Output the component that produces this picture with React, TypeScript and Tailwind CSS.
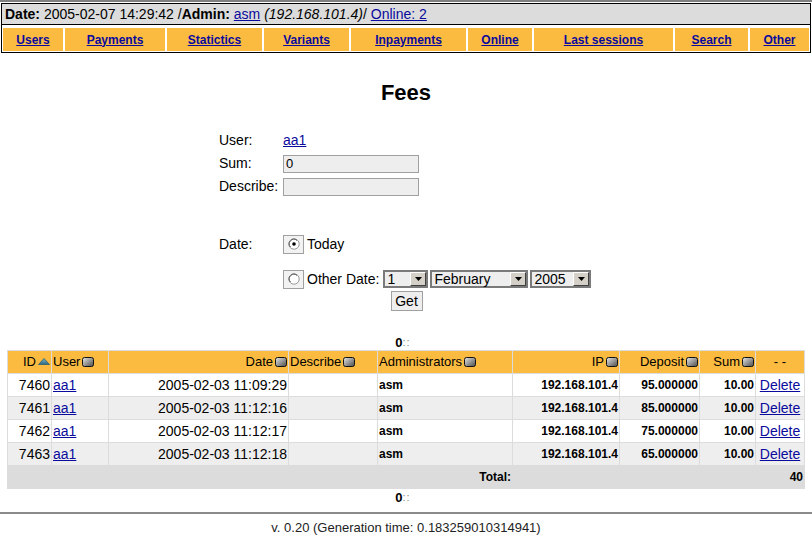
import React from "react";

const LINK = "text-[#0a0a9c] underline";

const navItems = [
  "Users",
  "Payments",
  "Statictics",
  "Variants",
  "Inpayments",
  "Online",
  "Last sessions",
  "Search",
  "Other",
];

const rows = [
  { id: 7460, date: "2005-02-03 11:09:29", dep: "95.000000" },
  { id: 7461, date: "2005-02-03 11:12:16", dep: "85.000000" },
  { id: 7462, date: "2005-02-03 11:12:17", dep: "75.000000" },
  { id: 7463, date: "2005-02-03 11:12:18", dep: "65.000000" },
];

// little grey "sort by" button
function SortBox() {
  return (
    <svg width="12" height="10" viewBox="0 0 12 10" className="inline-block align-[-1px] ml-[2px]">
      <defs>
        <linearGradient id="sb" x1="0" y1="0" x2="1" y2="1">
          <stop offset="0" stopColor="#e8e8e8" />
          <stop offset="1" stopColor="#4a4a4a" />
        </linearGradient>
      </defs>
      <rect x="0.5" y="0.5" width="11" height="9" rx="2" fill="url(#sb)" stroke="#111" />
    </svg>
  );
}

function SortUp() {
  return (
    <svg width="12" height="7" viewBox="0 0 12 7" className="inline-block align-[1px] ml-[2px]">
      <defs>
        <linearGradient id="su" x1="0" y1="0" x2="0" y2="1">
          <stop offset="0" stopColor="#7fb6cc" />
          <stop offset="1" stopColor="#2b6880" />
        </linearGradient>
      </defs>
      <path d="M6 0.5 L11.5 6.5 L0.5 6.5 Z" fill="url(#su)" stroke="#2b5f74" strokeWidth="0.8" />
    </svg>
  );
}

function Radio({ checked }: { checked?: boolean }) {
  return (
    <div className="w-[21px] h-[19px] border border-[#a0a0a0] bg-[#f2f2f2] flex items-center justify-center">
      <svg width="12" height="12" viewBox="0 0 12 12">
        <circle cx="6" cy="6" r="5.2" fill="#fff" stroke="#9a9a9a" />
        <path d="M2.5 9 A4.6 4.6 0 0 1 9 2.5" fill="none" stroke="#555" strokeWidth="1" />
        {checked && <circle cx="6" cy="6" r="1.8" fill="#000" />}
      </svg>
    </div>
  );
}

function FakeSelect({ value, width }: { value: string; width: string }) {
  return (
    <div className={`${width} h-[18px] border-2 border-[#7a7a7a] bg-[#eeeeee] flex items-center justify-between`}>
      <span className="pl-[2px] text-[14px] leading-none">{value}</span>
      <span className="w-[16px] h-[14px] bg-[#d4d0c8] border border-t-white border-l-white border-r-[#404040] border-b-[#404040] flex items-center justify-center">
        <svg width="7" height="4" viewBox="0 0 7 4">
          <path d="M0 0 H7 L3.5 4 Z" fill="#000" />
        </svg>
      </span>
    </div>
  );
}

function Pager() {
  return (
    <div className="h-[16px] flex items-center justify-center text-[13px] leading-none">
      <b className="ml-[-6px]">0</b>
      <span className="text-[#8a8a8a] text-[11px] tracking-[1px]">::</span>
    </div>
  );
}

export default function App() {
  const th = "h-[23px] border border-[#dcdcdc] text-[13px] font-normal px-[1px] whitespace-nowrap";
  const td = "h-[23px] border border-[#dcdcdc] px-[1px] whitespace-nowrap";

  return (
    <div className="w-[812px] h-[555px] overflow-hidden bg-white text-black font-['Liberation_Sans',Arial,sans-serif]">
      {/* top bar */}
      <div className="h-[2px] bg-[#808080]" />
      <div className="mt-[1px] mx-[1px] border border-black">
        <div className="h-[21px] bg-[#dcdcdc] border-b border-black pl-[3px] text-[14px] leading-[21px] whitespace-nowrap">
          <b>Date:</b> 2005-02-07 14:29:42 /<b>Admin:</b> <a className={LINK}>asm</a>{" "}
          <i>(192.168.101.4)</i>/ <a className={LINK}>Online: 2</a>
        </div>
        <div className="pt-[3px] pb-[1px] px-[1px] grid grid-cols-[60px_100px_95px_85px_115px_64px_139px_73px_59px] gap-[2px]">
          {navItems.map((n) => (
            <div key={n} className="h-[23px] bg-[#fbbb41] flex items-center justify-center">
              <a className={`${LINK} text-[12px] font-bold`}>{n}</a>
            </div>
          ))}
        </div>
      </div>

      {/* title */}
      <h1 className="mt-[27px] h-[25px] text-center text-[22px] leading-[25px] font-bold">Fees</h1>

      {/* form */}
      <div className="w-[374px] mx-auto mt-[24px] text-[14px]">
        <div className="h-[23px] flex items-center">
          <span className="w-[64px]">User:</span>
          <a className={LINK}>aa1</a>
        </div>
        <div className="h-[23px] flex items-center">
          <span className="w-[64px]">Sum:</span>
          <div className="w-[136px] h-[18px] border border-[#a0a0a0] bg-[#eeeeee] text-[13px] leading-[16px] pl-[2px]">0</div>
        </div>
        <div className="h-[23px] flex items-center">
          <span className="w-[64px]">Describe:</span>
          <div className="w-[136px] h-[18px] border border-[#a0a0a0] bg-[#eeeeee]" />
        </div>

        <div className="mt-[35px] h-[22px] flex items-center">
          <span className="w-[64px]">Date:</span>
          <Radio checked />
          <span className="ml-[3px]">Today</span>
        </div>
        <div className="mt-[12px] h-[24px] flex items-center">
          <span className="w-[64px]" />
          <Radio />
          <span className="ml-[3px]">Other Date:</span>
          <div className="ml-[4px] flex gap-[2px]">
            <FakeSelect value="1" width="w-[45px]" />
            <FakeSelect value="February" width="w-[98px]" />
            <FakeSelect value="2005" width="w-[61px]" />
          </div>
        </div>
      </div>
      <div className="flex justify-center">
        <div className="ml-[1px] w-[32px] h-[20px] border border-[#a0a0a0] bg-[#eeeeee] text-[14px] leading-[18px] text-center">Get</div>
      </div>

      <div className="mt-[23px]">
        <Pager />
      </div>

      {/* data table */}
      <table className="ml-[7px] w-[797px] table-fixed border-collapse text-[14px]">
        <colgroup>
          <col className="w-[44px]" />
          <col className="w-[57px]" />
          <col className="w-[180px]" />
          <col className="w-[89px]" />
          <col className="w-[135px]" />
          <col className="w-[107px]" />
          <col className="w-[80px]" />
          <col className="w-[56px]" />
          <col className="w-[49px]" />
        </colgroup>
        <thead>
          <tr className="bg-[#fbbb41]">
            <th className={`${th} text-right`}>ID<SortUp /></th>
            <th className={`${th} text-left`}>User<SortBox /></th>
            <th className={`${th} text-right`}>Date<SortBox /></th>
            <th className={`${th} text-left`}>Describe<SortBox /></th>
            <th className={`${th} text-left`}>Administrators<SortBox /></th>
            <th className={`${th} text-right`}>IP<SortBox /></th>
            <th className={`${th} text-right`}>Deposit<SortBox /></th>
            <th className={`${th} text-right`}>Sum<SortBox /></th>
            <th className={`${th} text-center`}>- -</th>
          </tr>
        </thead>
        <tbody>
          {rows.map((r, i) => (
            <tr key={r.id} className={i % 2 ? "bg-[#eeeeee]" : "bg-white"}>
              <td className={`${td} text-right`}>{r.id}</td>
              <td className={`${td} text-left`}><a className={LINK}>aa1</a></td>
              <td className={`${td} text-right`}>{r.date}</td>
              <td className={td}></td>
              <td className={`${td} text-left text-[12px] font-bold`}>asm</td>
              <td className={`${td} text-right text-[12px] font-bold`}>192.168.101.4</td>
              <td className={`${td} text-right text-[12px] font-bold`}>{r.dep}</td>
              <td className={`${td} text-right text-[12px] font-bold`}>10.00</td>
              <td className={`${td} text-center`}><a className={LINK}>Delete</a></td>
            </tr>
          ))}
          <tr className="bg-[#dcdcdc]">
            <td colSpan={5} className={`${td} text-right text-[12px] font-bold`}>Total:</td>
            <td colSpan={4} className={`${td} text-right text-[12px] font-bold`}>40</td>
          </tr>
        </tbody>
      </table>

      <Pager />

      {/* footer */}
      <div className="mt-[7px] h-[2px] bg-[#8a8a8a]" />
      <div className="h-[28px] flex items-center justify-center text-[13px] text-[#222]">
        v. 0.20 (Generation time: 0.183259010314941)
      </div>
    </div>
  );
}
